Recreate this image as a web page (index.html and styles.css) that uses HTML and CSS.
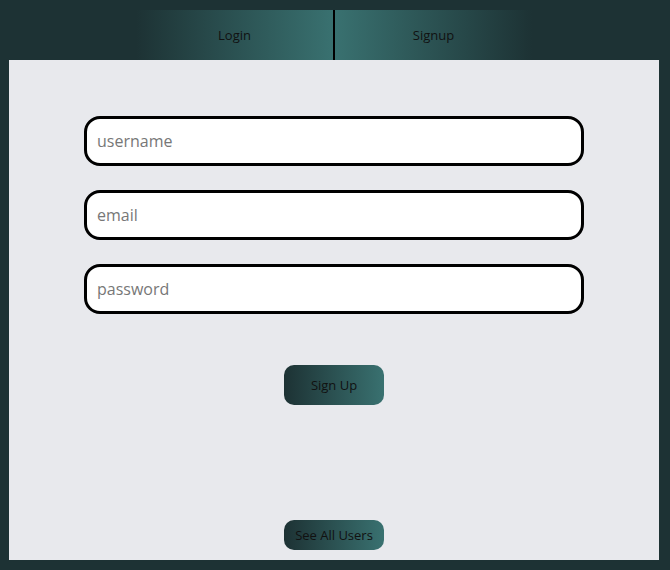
FILE: index.html
```html
<!DOCTYPE html>
<html>
<head>
<meta charset="utf-8">
<link rel="stylesheet" href="styles.css">
</head>
<body>
<div class="page">
  <nav class="nav">
    <a class="tab tab-login">Login</a>
    <span class="divider"></span>
    <a class="tab tab-signup">Signup</a>
  </nav>
  <main class="panel">
    <form class="form">
      <input class="field" type="text" placeholder="username">
      <input class="field" type="text" placeholder="email">
      <input class="field" type="password" placeholder="password">
      <button type="button" class="btn btn-signup">Sign Up</button>
    </form>
    <button type="button" class="btn btn-users">See All Users</button>
  </main>
</div>
</body>
</html>
```

FILE: styles.css
```css
html, body {
  margin: 0;
  padding: 0;
  background: #1d3234;
  font-family: "Open Sans", "Noto Sans", sans-serif;
}
.page {
  width: 670px;
  height: 570px;
  box-sizing: border-box;
  padding: 10px 11px 10px 9px;
  display: flex;
  flex-direction: column;
}
.nav {
  height: 50px;
  display: flex;
  justify-content: center;
}
.tab {
  width: 197px;
  display: flex;
  align-items: center;
  justify-content: center;
  font-size: 13px;
  color: #111;
}
.tab-login {
  background: linear-gradient(to right, #1d3234, #397170);
}
.tab-signup {
  background: linear-gradient(to right, #397170, #1d3234);
}
.divider {
  width: 2px;
  background: #000;
}
.panel {
  flex: 1;
  background: #e8e9ed;
  display: flex;
  flex-direction: column;
  align-items: center;
  padding-bottom: 10px;
}
.form {
  display: flex;
  flex-direction: column;
  align-items: center;
  padding-top: 56px;
  gap: 24px;
}
.field {
  width: 500px;
  height: 50px;
  box-sizing: border-box;
  border: 3px solid #000;
  border-radius: 16px;
  background: #fff;
  padding: 0 10px;
  font-family: "Open Sans", "Noto Sans", sans-serif;
  font-size: 16px;
  color: #222;
  outline: none;
}
.field::placeholder {
  color: #777;
}
.btn {
  width: 100px;
  border: none;
  border-radius: 10px;
  background: linear-gradient(to right, #1d3234, #397170);
  color: #111;
  font-family: "Open Sans", "Noto Sans", sans-serif;
  padding: 0;
}
.btn-signup {
  height: 40px;
  font-size: 13px;
  margin-top: 27px;
}
.btn-users {
  height: 30px;
  font-size: 13px;
  margin-top: auto;
}
```
